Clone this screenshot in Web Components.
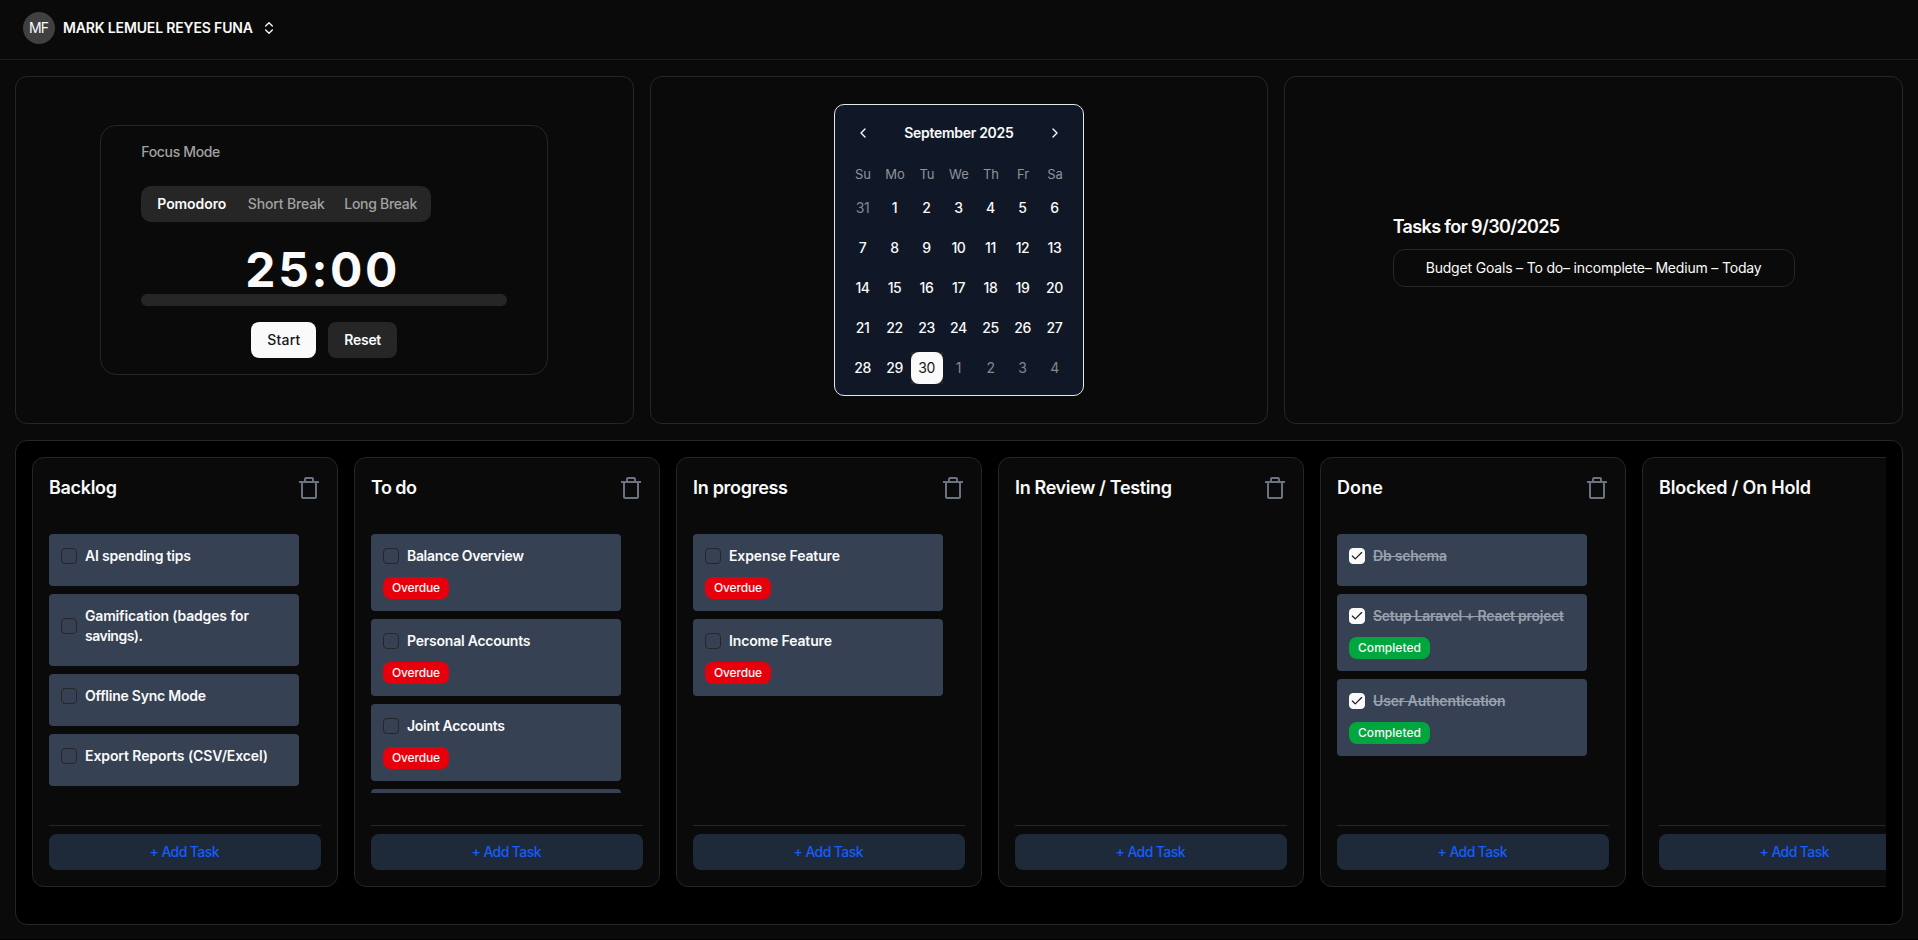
<!DOCTYPE html>
<html lang="en">
<head>
<meta charset="utf-8">
<title>Dashboard</title>
<style>
html,body{margin:0;height:100%;background:#000;overflow:hidden}
body{font-family:Inter,"Liberation Sans",sans-serif;font-size:14px;line-height:20px;color:#fafafa}
</style>
</head>
<body>
<app-shell></app-shell>
<script>
function define(name, html, init) {
  const tpl = document.createElement('template');
  tpl.innerHTML = html;
  customElements.define(name, class extends HTMLElement {
    connectedCallback() {
      if (this.shadowRoot) return;
      const root = this.attachShadow({ mode: 'open' });
      root.append(tpl.content.cloneNode(true));
      if (init) init.call(this, root);
    }
  });
}

/* Label whose tracking is adjusted so that it spans exactly w pixels. */
define('fit-label', `<style>
:host{display:inline-block;white-space:nowrap;font-kerning:normal}
span{display:inline-block}
:host([strike]) span{text-decoration:line-through;text-decoration-thickness:1px}
</style><span><slot></slot></span>`, function (root) {
  const span = root.querySelector('span');
  const w = +this.getAttribute('w');
  const n = this.textContent.length;
  const natural = span.getBoundingClientRect().width;
  const ls = (w - natural) / Math.max(1, n - 1);
  span.style.letterSpacing = ls + 'px';
  span.style.marginRight = -ls + 'px';
  this.style.width = w + 'px';
});

define('user-bar', `<style>
:host{display:flex;align-items:center;box-sizing:border-box;height:60px;padding:0 23px 4px;border-bottom:1px solid #1c1c1c;font-weight:600}
.avatar{width:32px;height:32px;border-radius:50%;background:#404040;display:grid;place-items:center;font-weight:400;margin-right:8px}
svg{width:16px;height:16px;margin-left:8px;fill:none;stroke:currentColor;stroke-width:2;stroke-linecap:round;stroke-linejoin:round}
</style>
<div class="avatar"><fit-label w="20">MF</fit-label></div>
<fit-label class="name" w="190">MARK LEMUEL REYES FUNA</fit-label>
<svg viewBox="0 0 24 24"><path d="m7 15 5 5 5-5M7 9l5-5 5 5"/></svg>`);

define('panel-card', `<style>
:host{display:flex;align-items:center;justify-content:center;box-sizing:border-box;border:1px solid #262626;border-radius:12px;min-width:0}
</style><slot></slot>`);

define('focus-timer', `<style>
:host{display:flex;flex-direction:column;box-sizing:border-box;width:448px;height:250px;padding:16px 40px 0;border:1px solid #262626;border-radius:16px}
.title{color:#a1a1a1;height:20px;font-weight:500}
.tabs{display:flex;align-self:flex-start;box-sizing:border-box;width:290px;height:36px;margin-top:24px;padding:8px 14px 8px 16px;justify-content:space-between;border-radius:10px;background:#262626;color:#a1a1a1;font-weight:500}
.tabs :first-child{color:#fafafa;margin-right:2px;font-weight:600}
.time{font-size:48px;line-height:48px;font-weight:700;text-align:center;margin-top:24px;height:48px;padding-right:6px;font-feature-settings:"calt" 0}
.bar{height:12px;border-radius:6px;background:#262626}
.actions{display:flex;justify-content:center;gap:12px;margin-top:16px}
.btn{height:36px;border-radius:8px;display:grid;place-items:center;font-weight:600;background:#262626;width:69px}
.btn.primary{background:#fafafa;color:#171717;width:65px;font-weight:500}
</style>
<div class="title"><fit-label w="79">Focus Mode</fit-label></div>
<div class="tabs"><fit-label w="69">Pomodoro</fit-label><fit-label w="77">Short Break</fit-label><fit-label w="73">Long Break</fit-label></div>
<div class="time"><fit-label w="152">25:00</fit-label></div>
<div class="bar"></div>
<div class="actions"><div class="btn primary"><fit-label w="33">Start</fit-label></div><div class="btn"><fit-label w="37">Reset</fit-label></div></div>`);

define('month-calendar', `<style>
:host{display:block;box-sizing:border-box;width:250px;height:292px;padding:12px;border:1px solid #e5e7eb;border-radius:10px;background:#101828}
.head{display:flex;align-items:center;justify-content:space-between;height:32px;padding:0 4px;font-weight:600}
svg{width:16px;height:16px;margin:0 4px;fill:none;stroke:currentColor;stroke-width:2;stroke-linecap:round;stroke-linejoin:round}
.grid{display:grid;grid-template-columns:repeat(7,32px);justify-content:center}
.week{color:#929395;font-size:13px;margin-top:15px;height:20px;text-align:center}
.days{grid-auto-rows:32px;row-gap:8px;margin-top:8px;font-weight:500}
.days>div{display:grid;place-items:center;padding-right:1px;letter-spacing:-.4px}
.days>.out{color:#85868a;font-weight:400}
.days>.sel{background:#262626;padding:0}
.sel span{display:grid;place-items:center;box-sizing:border-box;width:32px;height:32px;padding-right:1px;border-radius:8px;background:#fafafa;color:#171717;font-weight:400}
</style>
<div class="head"><svg viewBox="0 0 24 24"><path d="m15 18-6-6 6-6"/></svg><fit-label w="109.500">September 2025</fit-label><svg viewBox="0 0 24 24"><path d="m9 18 6-6-6-6"/></svg></div>
<div class="grid week"></div><div class="grid days"></div>`, function (root) {
  root.querySelector('.week').innerHTML = ['Su','Mo','Tu','We','Th','Fr','Sa'].map(d => `<div>${d}</div>`).join('');
  let out = '<div class="out">31</div>';
  for (let d = 1; d <= 30; d++) out += d === 30 ? '<div class="sel"><span>30</span></div>' : `<div>${d}</div>`;
  for (let d = 1; d <= 4; d++) out += `<div class="out">${d}</div>`;
  root.querySelector('.days').innerHTML = out;
});

define('day-agenda', `<style>
:host{display:block;width:402px}
h2{margin:0;font-size:18px;line-height:28px;font-weight:600}
.item{display:grid;place-items:center;box-sizing:border-box;height:38px;margin-top:8px;border:1px solid #262626;border-radius:12px}
</style>
<h2><fit-label w="167.5">Tasks for 9/30/2025</fit-label></h2>
<div class="item"><fit-label w="336">Budget Goals – To do– incomplete– Medium – Today</fit-label></div>`);

define('status-badge', `<style>
:host{display:inline-grid;place-items:center;box-sizing:border-box;height:22px;padding:0 9px;border-radius:8px;background:#e7000b;font-size:12px;line-height:16px;font-weight:500}
:host([kind=done]){background:#00a63e}
</style><slot></slot>`);

define('task-card', `<style>
:host{display:block;box-sizing:border-box;flex:none;width:250px;padding:12px 12px 20px;border-radius:4px;background:#364153;font-weight:600}
:host([badged]){padding-bottom:12px}
.row{display:flex;align-items:center;gap:8px}
.box{flex:none;box-sizing:border-box;width:16px;height:16px;border:1px solid #262626;border-radius:4px;display:grid;place-items:center}
svg{display:none;width:14px;height:14px;fill:none;stroke:#171717;stroke-width:2;stroke-linecap:round;stroke-linejoin:round}
:host([done]) .box{background:#fafafa;border-color:#fafafa}
:host([done]) svg{display:block}
:host([done]) .row{color:#99a1af}
.text{display:flex;flex-direction:column;align-items:flex-start}
.badge{display:flex}
:host([badged]) .badge{margin-top:11px}
</style>
<div class="row"><div class="box"><svg viewBox="0 0 24 24"><path d="M20 6 9 17l-5-5"/></svg></div><div class="text"><slot></slot></div></div>
<div class="badge"><slot name="badge"></slot></div>`);

define('board-column', `<style>
:host{display:flex;flex-direction:column;flex:none;box-sizing:border-box;width:306px;height:430px;padding:16px;border:1px solid #262626;border-radius:12px;background:#0a0a0a}
.head{display:flex;align-items:center;justify-content:space-between;height:28px;font-size:18px;line-height:28px;font-weight:600}
svg{width:24px;height:24px;fill:none;stroke:#6a7282;stroke-width:2}
.list{display:flex;flex-direction:column;gap:8px;height:259px;margin-top:32px;overflow:hidden}
.foot{margin-top:auto;padding-top:8px;border-top:1px solid #262626}
.add{display:grid;place-items:center;height:36px;padding-right:1px;border-radius:8px;background:#1e2939;color:#155dfc;font-weight:500}
</style>
<div class="head"><slot name="title"></slot><svg viewBox="0 0 24 24"><path d="M2 6h20M19 6v15a1 1 0 0 1-1 1H6a1 1 0 0 1-1-1V6M8 6V3a1 1 0 0 1 1-1h6a1 1 0 0 1 1 1v3"/></svg></div>
<div class="list"><slot></slot></div>
<div class="foot"><div class="add"><fit-label w="70">+ Add Task</fit-label></div></div>`);

define('task-board', `<style>
:host{display:block;box-sizing:border-box;height:485px;padding:16px;border:1px solid #262626;border-radius:12px;background:#000}
.scroll{display:flex;gap:16px;overflow:hidden}
</style><div class="scroll"></div>`, function (root) {
  const over = [48, 'Overdue', ''], comp = [63, 'Completed', 'kind="done"'];
  const columns = [
    ['Backlog', 68, [[[['AI spending tips', 106]]], [[['Gamification (badges for', 164], ['savings).', 58]]], [[['Offline Sync Mode', 121]]], [[['Export Reports (CSV/Excel)', 183]]]]],
    ['To do', 46, [[[['Balance Overview', 117]], over], [[['Personal Accounts', 123.5]], over], [[['Joint Accounts', 98]], over], [[['Budget Goals', 88]], over]]],
    ['In progress', 95, [[[['Expense Feature', 111]], over], [[['Income Feature', 103]], over]]],
    ['In Review / Testing', 157, []],
    ['Done', 46, [[[['Db schema', 74]], null, 1], [[['Setup Laravel + React project', 191]], comp, 1], [[['User Authentication', 132.5]], comp, 1]]],
    ['Blocked / On Hold', 152, []]
  ];
  root.querySelector('.scroll').innerHTML = columns.map(([title, w, tasks]) =>
    `<board-column><fit-label slot="title" w="${w}">${title}</fit-label>` +
    tasks.map(([lines, badge, done]) =>
      `<task-card ${badge ? 'badged' : ''} ${done ? 'done' : ''}>` +
      lines.map(([t, lw]) => `<fit-label ${done ? 'strike' : ''} w="${lw}">${t}</fit-label>`).join('') +
      (badge ? `<status-badge slot="badge" ${badge[2]}><fit-label w="${badge[0]}">${badge[1]}</fit-label></status-badge>` : '') +
      '</task-card>').join('') + '</board-column>').join('');
});

define('app-shell', `<style>
:host{display:flex;flex-direction:column;height:939px;background:#0a0a0a}
main{display:flex;flex-direction:column;gap:16px;padding:16px 15px 0}
.top{display:grid;grid-template-columns:repeat(3,1fr);gap:16px;height:348px}
</style>
<user-bar></user-bar>
<main>
<div class="top">
<panel-card><focus-timer></focus-timer></panel-card>
<panel-card><month-calendar></month-calendar></panel-card>
<panel-card><day-agenda></day-agenda></panel-card>
</div>
<task-board></task-board>
</main>`);
</script>
</body>
</html>
